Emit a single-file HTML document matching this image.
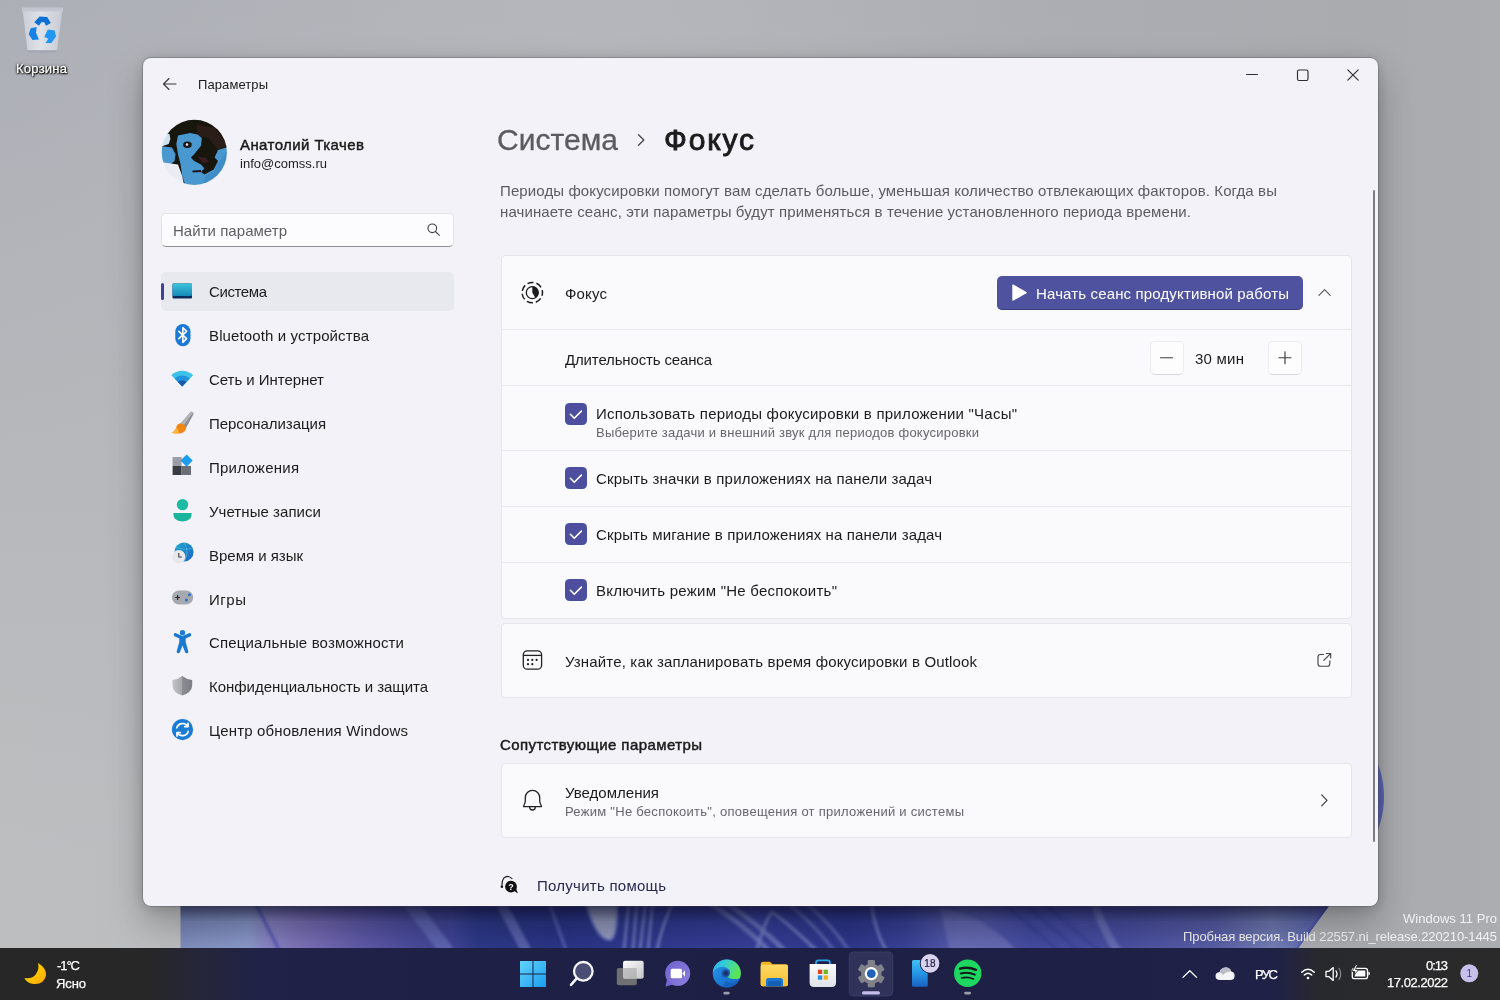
<!DOCTYPE html>
<html lang="ru"><head><meta charset="utf-8"><title>Параметры — Фокус</title>
<style>
*{box-sizing:border-box;margin:0;padding:0}
html,body{width:1500px;height:1000px;overflow:hidden}
body{position:relative;font-family:"Liberation Sans",sans-serif;background:#b3b5b9;}
.t{position:absolute;white-space:nowrap;}
.a{position:absolute;}
#desk{left:0;top:0;width:1500px;height:1000px;}
#win{left:143px;top:58px;width:1235px;height:848px;background:#f2f2f8;border-radius:8px;
 box-shadow:0 0 0 1px rgba(70,70,76,.32),0 18px 36px rgba(0,0,0,.26),0 2px 14px rgba(0,0,0,.16);}
.card{background:#fafafc;border:1px solid #e5e6ec;border-radius:4px;}
.div{height:1px;background:#e7e8ee;left:501px;width:850px;}
.cb{width:21.5px;height:21.5px;border-radius:4.5px;background:#4d4f9e;}
.nb{width:34px;height:34px;border-radius:5px;background:#fdfdfe;border:1px solid #ebecf1;border-bottom-color:#d6d7dd;}
#tb{left:0;top:948px;width:1500px;height:52px;background:linear-gradient(90deg,#272727 0,#272728 10%,#25263a 13.5%,#202247 17%,#1e2046 30%,#1d1f45 50%,#1e2046 70%,#1f2146 85%,#24253a 86.500%,#28292d 88%,#2a2a2c 92%,#2a2a2b 100%);}
svg{position:absolute;overflow:visible}
</style></head><body>
<div class="a" id="desk"><svg class="a" style="left:0;top:0;" width="1500" height="1000" viewBox="0 0 1500 1000">
<defs>
<linearGradient id="dg" x1="0" y1="0" x2="0" y2="1"><stop offset="0" stop-color="#acafb6"/><stop offset=".3" stop-color="#b3b5ba"/><stop offset=".6" stop-color="#b9babd"/><stop offset=".85" stop-color="#bdbebf"/><stop offset="1" stop-color="#bebebf"/></linearGradient>
<linearGradient id="dgr" x1="0" y1="0" x2="1" y2="0"><stop offset="0" stop-color="#b9babe" stop-opacity="0"/><stop offset=".4" stop-color="#b9babe" stop-opacity=".7"/><stop offset=".7" stop-color="#abadb2" stop-opacity=".85"/><stop offset=".92" stop-color="#a9abaf" stop-opacity="1"/><stop offset="1" stop-color="#abadb0" stop-opacity="1"/></linearGradient>
<linearGradient id="bl" gradientUnits="userSpaceOnUse" x1="180" y1="0" x2="1330" y2="0">
<stop offset="0" stop-color="#8190c0"/><stop offset=".06" stop-color="#8b9acb"/><stop offset=".075" stop-color="#8a86c4"/><stop offset=".11" stop-color="#7b70b6"/><stop offset=".16" stop-color="#5f5aa8"/>
<stop offset=".2" stop-color="#4c4d9e"/><stop offset=".235" stop-color="#414698"/><stop offset=".26" stop-color="#2e3a8a"/><stop offset=".33" stop-color="#2a3586"/><stop offset=".42" stop-color="#323b92"/>
<stop offset=".5" stop-color="#38409a"/><stop offset=".58" stop-color="#2e378c"/><stop offset=".63" stop-color="#3a4298"/><stop offset=".68" stop-color="#5a60ae"/><stop offset=".74" stop-color="#454ca2"/>
<stop offset=".82" stop-color="#4a50a2"/><stop offset=".9" stop-color="#5a60a8"/><stop offset=".95" stop-color="#7580b6"/><stop offset="1" stop-color="#5a64b2"/></linearGradient>
<linearGradient id="bsh" x1="0" y1="0" x2="0" y2="1"><stop offset="0" stop-color="#10143a" stop-opacity=".55"/><stop offset=".35" stop-color="#10143a" stop-opacity=".12"/><stop offset="1" stop-color="#10143a" stop-opacity="0"/></linearGradient>
<clipPath id="bc"><path d="M180.500 890 V950 H1297 L1329 906 L1340 890 Z"/><ellipse cx="1340" cy="797" rx="44" ry="65"/></clipPath>
<filter id="bf"><feGaussianBlur stdDeviation="1.500"/></filter>
</defs>
<rect width="1500" height="1000" fill="url(#dg)"/>
<rect width="1500" height="1000" fill="url(#dgr)"/>
<g clip-path="url(#bc)">
<rect x="170" y="700" width="1240" height="250" fill="url(#bl)"/>
<g filter="url(#bf)" fill="none" stroke-linecap="round">
<path d="M254 900 L279 950" stroke="#4a50b2" stroke-width="2.500"/>
<path d="M408 900 L446 950" stroke="#727bc2" stroke-width="14" opacity=".6"/>
<path d="M499 900 L526 950" stroke="#6c75bc" stroke-width="10" opacity=".7"/>
<path d="M550 905 L566 950" stroke="#6a74c0" stroke-width="3" opacity=".7"/>
<path d="M585 900 Q596 940 610 940 Q618 938 617 900Z" fill="#9aa0c2" stroke="#6e7ac6" stroke-width="2"/>
<path d="M629 900 L624 950 M637 900 L633 950 M646 900 L640 950 M653 900 L648 950" stroke="#7c88ca" stroke-width="2.600" opacity=".85"/>
<path d="M674 900 Q662 925 657 950" stroke="#7a86c8" stroke-width="2.400"/>
<path d="M705 900 Q745 925 770 952 M722 900 Q760 925 786 952" stroke="#7a84c6" stroke-width="5" opacity=".7"/>
<path d="M756 952 Q766 918 772 912 Q790 925 818 952" stroke="#7a84c8" stroke-width="3" opacity=".85"/>
<path d="M790 905 Q815 925 835 952 M806 903 Q832 925 850 952" stroke="#6872ba" stroke-width="3" opacity=".8"/>
<path d="M871 900 Q874 930 887 952" stroke="#7a86ca" stroke-width="2.400"/>
<path d="M940 908 Q985 915 1018 952 L950 952Z" fill="#6a70b8" stroke="none" opacity=".8"/>
<path d="M1000 900 L1060 952 M1020 900 L1080 952 M1040 900 L1100 952" stroke="#2c3590" stroke-width="2" opacity=".6"/>
<path d="M1094 900 Q1100 925 1118 952" stroke="#8088c6" stroke-width="8" opacity=".55"/>
<path d="M1329 905 L1297 950" stroke="#4a55b4" stroke-width="2.500"/>
</g>
<rect x="170" y="906" width="1240" height="44" fill="url(#bsh)"/>
</g>
</svg></div>
<svg class="a" style="left:0;top:0;" width="1500" height="1000" viewBox="0 0 1500 1000">
<defs><linearGradient id="rb" x1="0" y1="0" x2="1" y2="0"><stop offset="0" stop-color="#c9cdd7"/><stop offset=".45" stop-color="#e0e3e9"/><stop offset="1" stop-color="#c6cad4"/></linearGradient>
<filter id="rbf"><feGaussianBlur stdDeviation=".35"/></filter></defs>
<g filter="url(#rbf)">
<path d="M22.500 9.500 L62.500 9.500 L57 50 Q56.500 51.500 54.500 51.500 L30 51.500 Q28 51.500 27.500 50 Z" fill="url(#rb)" opacity=".97"/>
<path d="M21.800 7.500 H63 V11.500 H21.800Z" fill="#c3c7d1" opacity=".9"/>
<path d="M27.500 50.200 H56.500 V52.300 H27.500Z" fill="#a2a6b2"/>
<g transform="translate(42.500 30) scale(1.180) translate(-42.500 -30)">
<path d="M35.500 23.500 L40 18.500 L46.500 19 L49.500 24 L45.500 26.500 L44 23.500 L41.500 23.500 L39.500 26.500Z" fill="#0f6fd2"/>
<path d="M32.500 28.500 L37.500 27.500 L37 32.500 L39.500 38 L34 38.500 L30.800 33.500Z" fill="#1682e4"/>
<path d="M47 29.500 L52.800 30.500 L54 35.500 L50 41 L45 41 L47.500 37.500 L44 36Z" fill="#2196f3"/>
</g></g>
</svg>
<span class="t" style="top:59.5px;line-height:18px;font-size:13px;color:#fff;-webkit-text-stroke:0.3px #fff;letter-spacing:0.247px;left:16px;text-shadow:0 1px 2px #000,0 0 3px #000,1px 1px 1px rgba(0,0,0,.9),0 0 1px #000;">Корзина</span>
<span class="t" style="top:910.0px;line-height:18px;font-size:13px;color:#f1f1f3;letter-spacing:0.024px;right:3.0px;">Windows 11 Pro</span>
<span class="t" style="top:928.0px;line-height:18px;font-size:13px;color:#f1f1f3;letter-spacing:-0.083px;right:3.1px;">Пробная версия. Build 22557.ni_release.220210-1445</span>
<div class="a" id="win"></div>
<svg class="a" style="left:0;top:0;" width="1500" height="1000" viewBox="0 0 1500 1000"><path d="M176 84 H163.500 M169 78.500 L163.500 84 L169 89.500" fill="none" stroke="#3a3a3a" stroke-width="1.15" stroke-linecap="round" stroke-linejoin="round"/></svg>
<span class="t" style="top:76.0px;line-height:18px;font-size:13px;color:#1b1b1b;letter-spacing:0.088px;left:198px;">Параметры</span>
<svg class="a" style="left:0;top:0;" width="1500" height="1000" viewBox="0 0 1500 1000"><g fill="none" stroke="#2e2e2e" stroke-width="1.15" stroke-linecap="round">
<path d="M1246.500 74.500 H1257.500"/>
<rect x="1297.500" y="70" width="10.500" height="10.500" rx="1.500"/>
<path d="M1347.800 69.800 L1358.200 80.200 M1358.200 69.800 L1347.800 80.200"/></g></svg>
<svg class="a" style="left:0;top:0;" width="1500" height="1000" viewBox="0 0 1500 1000"><defs><clipPath id="av"><circle cx="194.300" cy="152.300" r="32.600"/></clipPath><filter id="avf"><feGaussianBlur stdDeviation=".55"/></filter></defs>
<g clip-path="url(#av)"><g filter="url(#avf)">
<rect x="158" y="116" width="74" height="74" fill="#17120f"/>
<path d="M196 124 L215 128 L228 146 L218 150 L208 138 L198 136Z" fill="#2a1a15"/>
<path d="M160 132 L169.500 134 L170.400 139 L168.700 144 L160 147Z" fill="#cfe0ee"/>
<path d="M160 146 L172 147.400 L175.500 154.200 L174.600 161 L170.400 164.400 L160 166Z" fill="#4b97cf"/>
<path d="M160 162 L178 164.400 L182.300 176.300 L185 190 L160 190Z" fill="#e9edf3"/>
<path d="M178 135.500 L190 133 L197.600 134.600 L201.800 138 L201 145.700 L197.600 150 L194.200 154.200 L190.800 157.600 L194.200 161 L201 164.400 L204.400 168.600 L201 172 L204.400 174.600 L213.700 169.500 L218 161 L214.600 157.600 L218 150 L228 147 L228 166 L218 180 L201 188 L185.700 186 L182.300 176.300 L180.600 164.400 L178 154.200 L176.300 144Z" fill="#4a98d0"/>
<path d="M205 176 L214 171 L219 162 L228 150 L228 170 L216 182 L202 187Z" fill="#3f8cc6"/>
<ellipse cx="187.400" cy="144.800" rx="4.300" ry="3.300" fill="#1b1513"/>
<circle cx="187" cy="144.600" r="1.300" fill="#d4e0ec"/>
<path d="M192.500 170.400 L201 169.900 L201 171.900 L192.500 172.400Z" fill="#1f181a"/>
<path d="M197 156 L206 158 L209 162 L203 163Z" fill="#3a1f22"/>
</g></g></svg>
<span class="t" style="top:134.0px;line-height:21px;font-size:15px;color:#1a1a1a;-webkit-text-stroke:0.45px #1a1a1a;letter-spacing:0.412px;left:240px;">Анатолий Ткачев</span>
<span class="t" style="top:155.0px;line-height:18px;font-size:13px;color:#1f1f1f;letter-spacing:0.009px;left:240px;">info@comss.ru</span>
<div class="a" style="left:161px;top:213px;width:293px;height:34px;background:#fcfcfe;border:1px solid #e3e4ea;border-bottom:1px solid #8d8e96;border-radius:5px;"></div>
<span class="t" style="top:219.5px;line-height:21px;font-size:15px;color:#5e5e62;letter-spacing:0.039px;left:173px;">Найти параметр</span>
<svg class="a" style="left:0;top:0;" width="1500" height="1000" viewBox="0 0 1500 1000"><g fill="none" stroke="#424242" stroke-width="1.15" stroke-linecap="round"><circle cx="432.300" cy="228.300" r="4.300"/><path d="M435.500 231.500 L439.300 235.300"/></g></svg>
<div class="a" style="left:161px;top:272px;width:293px;height:39px;background:#e8e9ef;border-radius:5px;"></div>
<div class="a" style="left:161px;top:282.5px;width:3px;height:17.5px;background:#3f4197;border-radius:2px;"></div>
<span class="t" style="top:281.0px;line-height:21px;font-size:15px;color:#1c1c1c;letter-spacing:-0.402px;left:209px;">Система</span>
<svg class="a" style="left:0;top:0;" width="1500" height="1000" viewBox="0 0 1500 1000"><defs><linearGradient id="sysg" x1="0" y1="0" x2="0" y2="1"><stop offset="0" stop-color="#3cc4dc"/><stop offset="1" stop-color="#1688b8"/></linearGradient></defs>
<rect x="172.500" y="283.500" width="19.500" height="15" rx="1" fill="#0b2d5e"/>
<rect x="172.500" y="283.500" width="19.500" height="12.600" rx="1" fill="url(#sysg)"/></svg>
<span class="t" style="top:325.0px;line-height:21px;font-size:15px;color:#1c1c1c;letter-spacing:0.125px;left:209px;">Bluetooth и устройства</span>
<svg class="a" style="left:0;top:0;" width="1500" height="1000" viewBox="0 0 1500 1000"><rect x="175.300" y="324" width="15.200" height="22.200" rx="7.600" fill="#1a7ad8"/>
<path d="M178.800 331.300 L186.600 338.700 L182.800 342.300 V327.700 L186.600 331.300 L178.800 338.700" fill="none" stroke="#fff" stroke-width="1.600" stroke-linejoin="round" stroke-linecap="round"/></svg>
<span class="t" style="top:369.0px;line-height:21px;font-size:15px;color:#1c1c1c;letter-spacing:-0.038px;left:209px;">Сеть и Интернет</span>
<svg class="a" style="left:0;top:0;" width="1500" height="1000" viewBox="0 0 1500 1000"><path d="M182.200 386.400 L171.300 375.200 A15.400 15.400 0 0 1 193.100 375.200Z" fill="#3fc2ea"/>
<path d="M182.200 386.400 L174.600 378.600 A10.800 10.800 0 0 1 189.800 378.600Z" fill="#2293dc"/>
<path d="M182.200 386.400 L177.900 382 A6.200 6.200 0 0 1 186.500 382Z" fill="#1a5aa8"/></svg>
<span class="t" style="top:413.0px;line-height:21px;font-size:15px;color:#1c1c1c;letter-spacing:-0.042px;left:209px;">Персонализация</span>
<svg class="a" style="left:0;top:0;" width="1500" height="1000" viewBox="0 0 1500 1000"><path d="M190.800 411.800 Q193.600 411.400 193.600 414 L185.800 428.200 L180 424.200Z" fill="#8b8d95"/>
<path d="M190.800 411.800 Q192.500 411.600 193.200 412.600 L183 426.300 L180 424.200Z" fill="#b2b4ba"/>
<path d="M180.200 423.400 Q185 423.600 186.200 428 Q185.600 433.400 178.500 433.400 Q174.500 433.800 171.600 432.800 Q175.600 430.500 176.200 427.200 Q177.200 423.400 180.200 423.400Z" fill="#f18612"/>
<path d="M171.600 432.800 Q175.600 430.500 176.200 427.200 Q179.400 431 178.500 433.400 Q174.500 433.800 171.600 432.800Z" fill="#f8b840"/></svg>
<span class="t" style="top:457.0px;line-height:21px;font-size:15px;color:#1c1c1c;letter-spacing:0.249px;left:209px;">Приложения</span>
<svg class="a" style="left:0;top:0;" width="1500" height="1000" viewBox="0 0 1500 1000"><rect x="172.600" y="457" width="9" height="9" fill="#9b9ea6"/>
<rect x="172.600" y="466" width="9" height="9" fill="#3a3c43"/>
<rect x="181.600" y="466" width="9.400" height="9" fill="#6c6e76"/>
<rect x="181.400" y="457.200" width="8.600" height="8.600" transform="rotate(45 185.700 461.500) translate(0 -1.3)" fill="#1b9cec"/></svg>
<span class="t" style="top:501.0px;line-height:21px;font-size:15px;color:#1c1c1c;letter-spacing:0.059px;left:209px;">Учетные записи</span>
<svg class="a" style="left:0;top:0;" width="1500" height="1000" viewBox="0 0 1500 1000"><circle cx="182.500" cy="504.600" r="5.700" fill="#1dbba4"/>
<path d="M173.300 513 H191.700 Q192 521.400 182.500 521.400 Q173 521.400 173.300 513Z" fill="#19b49c"/></svg>
<span class="t" style="top:544.5px;line-height:21px;font-size:15px;color:#1c1c1c;letter-spacing:-0.017px;left:209px;">Время и язык</span>
<svg class="a" style="left:0;top:0;" width="1500" height="1000" viewBox="0 0 1500 1000"><defs><linearGradient id="glb" x1="0" y1="0" x2="1" y2="1"><stop offset="0" stop-color="#22a8cc"/><stop offset="1" stop-color="#1d64c4"/></linearGradient></defs>
<circle cx="184" cy="552" r="9.600" fill="url(#glb)"/>
<path d="M184 542.400 Q190 552 184 561.600 M176 547 Q184 551 193 548" fill="none" stroke="#5cc8e8" stroke-width=".8" opacity=".6"/>
<circle cx="178.800" cy="556.800" r="6.700" fill="#e6e8ec"/>
<path d="M178.800 553 V557 H181.800" fill="none" stroke="#3a3c44" stroke-width="1.100"/></svg>
<span class="t" style="top:588.5px;line-height:21px;font-size:15px;color:#1c1c1c;letter-spacing:0.541px;left:209px;">Игры</span>
<svg class="a" style="left:0;top:0;" width="1500" height="1000" viewBox="0 0 1500 1000"><rect x="172" y="590.500" width="21.200" height="14" rx="7" fill="#a7a9b0"/>
<path d="M175.200 597.500 H180 M177.600 595.100 V599.900" stroke="#2b2b30" stroke-width="1.200" fill="none"/>
<circle cx="186.400" cy="600" r="1.500" fill="#2a6fd0"/><circle cx="189.400" cy="594.800" r="1.500" fill="#2a6fd0"/></svg>
<span class="t" style="top:632.0px;line-height:21px;font-size:15px;color:#1c1c1c;letter-spacing:0.159px;left:209px;">Специальные возможности</span>
<svg class="a" style="left:0;top:0;" width="1500" height="1000" viewBox="0 0 1500 1000"><circle cx="182.500" cy="632.700" r="2.600" fill="#1a7ad2"/>
<path d="M173.800 634.400 Q174.300 632.600 176 633.200 L182.500 636 L189 633.200 Q190.700 632.600 191.200 634.400 Q191.500 635.800 190 636.500 L185.700 638.600 V642 L188.300 651.200 Q188.600 653 187 653.300 Q185.600 653.500 185 652 L182.500 645.500 L180 652 Q179.400 653.500 178 653.300 Q176.400 653 176.700 651.200 L179.300 642 V638.600 L175 636.500 Q173.500 635.800 173.800 634.400Z" fill="#1a7ad2"/></svg>
<span class="t" style="top:676.0px;line-height:21px;font-size:15px;color:#1c1c1c;letter-spacing:-0.033px;left:209px;">Конфиденциальность и защита</span>
<svg class="a" style="left:0;top:0;" width="1500" height="1000" viewBox="0 0 1500 1000"><defs><linearGradient id="shg" x1="0" y1="0" x2="1" y2="0"><stop offset="0" stop-color="#c2c4c8"/><stop offset=".5" stop-color="#a4a6aa"/><stop offset=".5" stop-color="#8b8d92"/><stop offset="1" stop-color="#7c7e84"/></linearGradient></defs>
<path d="M182.300 676 Q186.500 679.400 192.200 680 V685.500 Q191.800 692.500 182.300 695.600 Q172.800 692.500 172.500 685.500 V680 Q178.100 679.400 182.300 676Z" fill="url(#shg)"/></svg>
<span class="t" style="top:720.0px;line-height:21px;font-size:15px;color:#1c1c1c;letter-spacing:0.166px;left:209px;">Центр обновления Windows</span>
<svg class="a" style="left:0;top:0;" width="1500" height="1000" viewBox="0 0 1500 1000"><circle cx="182.500" cy="729.600" r="10.600" fill="#1b7cd6"/>
<g fill="none" stroke="#fff" stroke-width="1.700" stroke-linecap="round" stroke-linejoin="round">
<path d="M176.800 727.800 A6 6 0 0 1 187.600 726.300"/><path d="M188.200 731.400 A6 6 0 0 1 177.400 732.900"/>
<path d="M188 723.300 V726.600 H184.700"/><path d="M177 735.900 V732.600 H180.300"/></g></svg>
<span class="t" style="top:119.5px;line-height:40px;font-size:30px;color:#5c5c60;-webkit-text-stroke:0.3px #5c5c60;letter-spacing:0.030px;left:497px;">Система</span>
<svg class="a" style="left:0;top:0;" width="1500" height="1000" viewBox="0 0 1500 1000"><path d="M638.500 134.800 L643.800 140 L638.500 145.200" fill="none" stroke="#4a4a4e" stroke-width="1.400" stroke-linecap="round" stroke-linejoin="round"/></svg>
<span class="t" style="top:119.5px;line-height:40px;font-size:30px;color:#1b1b1b;-webkit-text-stroke:0.9px #1b1b1b;letter-spacing:1.846px;left:664px;">Фокус</span>
<span class="t" style="top:180.0px;line-height:21px;font-size:15px;color:#5c5c60;letter-spacing:0.107px;left:500px;">Периоды фокусировки помогут вам сделать больше, уменьшая количество отвлекающих факторов. Когда вы</span>
<span class="t" style="top:201.0px;line-height:21px;font-size:15px;color:#5c5c60;letter-spacing:0.101px;left:500px;">начинаете сеанс, эти параметры будут применяться в течение установленного периода времени.</span>
<div class="a card" style="left:501px;top:255px;width:851px;height:364px;"></div>
<div class="a div" style="top:329px"></div>
<div class="a div" style="top:385px"></div>
<div class="a div" style="top:450px"></div>
<div class="a div" style="top:506px"></div>
<div class="a div" style="top:562px"></div>
<svg class="a" style="left:0;top:0;" width="1500" height="1000" viewBox="0 0 1500 1000"><g fill="none" stroke="#1c1c1c">
<circle cx="532.300" cy="292.600" r="10.200" stroke-width="1.500" stroke-dasharray="6.200 2.960" stroke-dashoffset="3" />
<circle cx="532.300" cy="292.600" r="6" stroke-width="1.300"/></g>
<path d="M532.300 292.600 V286.600 A6 6 0 0 1 535.300 297.800Z" fill="#1c1c1c"/></svg>
<span class="t" style="top:283.0px;line-height:21px;font-size:15px;color:#1b1b1b;letter-spacing:0.173px;left:565px;">Фокус</span>
<div class="a" style="left:997px;top:276px;width:306px;height:34px;background:#4f529f;border-radius:5px;border-bottom:1px solid #3c3e80;"></div>
<svg class="a" style="left:0;top:0;" width="1500" height="1000" viewBox="0 0 1500 1000"><path d="M1012.300 285.300 Q1012.300 284 1013.500 284.600 L1026.300 291.900 Q1027.400 292.600 1026.300 293.300 L1013.500 300.600 Q1012.300 301.200 1012.300 299.900Z" fill="#fff"/></svg>
<span class="t" style="top:283.0px;line-height:21px;font-size:15px;color:#fff;letter-spacing:0.146px;left:1036px;">Начать сеанс продуктивной работы</span>
<svg class="a" style="left:0;top:0;" width="1500" height="1000" viewBox="0 0 1500 1000"><path d="M1319 295.400 L1324.600 289.700 L1330.200 295.400" fill="none" stroke="#5a5a5e" stroke-width="1.200" stroke-linecap="round" stroke-linejoin="round"/></svg>
<span class="t" style="top:348.5px;line-height:21px;font-size:15px;color:#1b1b1b;letter-spacing:-0.150px;left:565px;">Длительность сеанса</span>
<div class="a nb" style="left:1150px;top:341px;"></div>
<div class="a nb" style="left:1268px;top:341px;"></div>
<svg class="a" style="left:0;top:0;" width="1500" height="1000" viewBox="0 0 1500 1000"><g fill="none" stroke="#3c3c3c" stroke-width="1.150" stroke-linecap="round"><path d="M1160.500 357.700 H1172.500"/><path d="M1279 357.700 H1291 M1285 351.700 V363.700"/></g></svg>
<span class="t" style="top:348.0px;line-height:21px;font-size:15px;color:#1b1b1b;letter-spacing:0.234px;left:1195px;">30 мин</span>
<div class="a cb" style="left:565.400px;top:403.3px;"></div>
<svg class="a" style="left:0;top:0;" width="1500" height="1000" viewBox="0 0 1500 1000"><path d="M570.4 414.3 L574.3 418.2 L581.4 411.1" fill="none" stroke="#fff" stroke-width="1.600" stroke-linecap="round" stroke-linejoin="round"/></svg>
<span class="t" style="top:403.0px;line-height:21px;font-size:15px;color:#1b1b1b;letter-spacing:0.237px;left:596px;">Использовать периоды фокусировки в приложении "Часы"</span>
<div class="a cb" style="left:565.400px;top:467.3px;"></div>
<svg class="a" style="left:0;top:0;" width="1500" height="1000" viewBox="0 0 1500 1000"><path d="M570.4 478.3 L574.3 482.2 L581.4 475.1" fill="none" stroke="#fff" stroke-width="1.600" stroke-linecap="round" stroke-linejoin="round"/></svg>
<span class="t" style="top:468.0px;line-height:21px;font-size:15px;color:#1b1b1b;letter-spacing:0.170px;left:596px;">Скрыть значки в приложениях на панели задач</span>
<div class="a cb" style="left:565.400px;top:523.3px;"></div>
<svg class="a" style="left:0;top:0;" width="1500" height="1000" viewBox="0 0 1500 1000"><path d="M570.4 534.3 L574.3 538.2 L581.4 531.1" fill="none" stroke="#fff" stroke-width="1.600" stroke-linecap="round" stroke-linejoin="round"/></svg>
<span class="t" style="top:524.0px;line-height:21px;font-size:15px;color:#1b1b1b;letter-spacing:0.137px;left:596px;">Скрыть мигание в приложениях на панели задач</span>
<div class="a cb" style="left:565.400px;top:579.3px;"></div>
<svg class="a" style="left:0;top:0;" width="1500" height="1000" viewBox="0 0 1500 1000"><path d="M570.4 590.3 L574.3 594.2 L581.4 587.1" fill="none" stroke="#fff" stroke-width="1.600" stroke-linecap="round" stroke-linejoin="round"/></svg>
<span class="t" style="top:580.0px;line-height:21px;font-size:15px;color:#1b1b1b;letter-spacing:0.251px;left:596px;">Включить режим "Не беспокоить"</span>
<span class="t" style="top:424.0px;line-height:18px;font-size:13px;color:#66666b;letter-spacing:0.233px;left:596px;">Выберите задачи и внешний звук для периодов фокусировки</span>
<div class="a card" style="left:501px;top:623px;width:851px;height:75px;"></div>
<svg class="a" style="left:0;top:0;" width="1500" height="1000" viewBox="0 0 1500 1000"><g fill="none" stroke="#222" stroke-width="1.300"><rect x="523.300" y="650.800" width="18.300" height="18.400" rx="4"/><path d="M523.300 655.400 H541.600"/></g>
<g fill="#1c1c1c"><circle cx="528" cy="659.900" r="1.100"/><circle cx="532.300" cy="659.900" r="1.100"/><circle cx="536.600" cy="659.900" r="1.100"/><circle cx="528" cy="664.200" r="1.100"/><circle cx="532.300" cy="664.200" r="1.100"/></g></svg>
<span class="t" style="top:650.5px;line-height:21px;font-size:15px;color:#1b1b1b;letter-spacing:0.154px;left:565px;">Узнайте, как запланировать время фокусировки в Outlook</span>
<svg class="a" style="left:0;top:0;" width="1500" height="1000" viewBox="0 0 1500 1000"><g fill="none" stroke="#444" stroke-width="1.150" stroke-linecap="round" stroke-linejoin="round">
<path d="M1323.500 654.500 H1320.500 Q1318 654.500 1318 657 V663.700 Q1318 666.200 1320.500 666.200 H1327.300 Q1329.800 666.200 1329.800 663.700 V660.700"/>
<path d="M1323.800 660.400 L1330.600 653.600 M1326.300 653.500 H1330.700 V657.900"/></g></svg>
<span class="t" style="top:734.0px;line-height:21px;font-size:15px;color:#1a1a1a;-webkit-text-stroke:0.45px #1a1a1a;letter-spacing:0.419px;left:500px;">Сопутствующие параметры</span>
<div class="a card" style="left:501px;top:763px;width:851px;height:75px;"></div>
<svg class="a" style="left:0;top:0;" width="1500" height="1000" viewBox="0 0 1500 1000"><g fill="none" stroke="#222" stroke-width="1.300" stroke-linejoin="round" stroke-linecap="round">
<path d="M523.500 806.600 L525.300 801.600 V797.600 A7.200 7.300 0 0 1 539.700 797.600 V801.600 L541.500 806.600 Z"/>
<path d="M529.700 807 A2.800 3 0 0 0 535.300 807"/></g></svg>
<span class="t" style="top:782.0px;line-height:21px;font-size:15px;color:#1b1b1b;letter-spacing:0.021px;left:565px;">Уведомления</span>
<span class="t" style="top:803.0px;line-height:18px;font-size:13px;color:#66666b;letter-spacing:0.274px;left:565px;">Режим "Не беспокоить", оповещения от приложений и системы</span>
<svg class="a" style="left:0;top:0;" width="1500" height="1000" viewBox="0 0 1500 1000"><path d="M1321.700 794.800 L1327 800.300 L1321.700 805.800" fill="none" stroke="#3c3c3c" stroke-width="1.200" stroke-linecap="round" stroke-linejoin="round"/></svg>
<svg class="a" style="left:0;top:0;" width="1500" height="1000" viewBox="0 0 1500 1000"><path d="M512 878.600 Q507.500 874.500 503.800 878.200 Q501.800 880.600 502 886" fill="none" stroke="#1a1a1a" stroke-width="1.100" stroke-linecap="round"/>
<circle cx="501.900" cy="886.800" r="1.300" fill="#1a1a1a"/>
<circle cx="511" cy="886.600" r="5.900" fill="#111"/><path d="M513.500 890.500 L518 893.600 L515.800 888Z" fill="#111"/>
<text x="511" y="889.800" font-size="9" font-weight="700" fill="#fff" text-anchor="middle" font-family="Liberation Sans,sans-serif">?</text></svg>
<span class="t" style="top:875.1px;line-height:21px;font-size:15px;color:#29294f;letter-spacing:0.259px;left:537px;">Получить помощь</span>
<div class="a" style="left:1373px;top:190px;width:2px;height:652px;background:#7c7c83;border-radius:1px;"></div>
<div class="a" id="tb"></div>
<svg class="a" style="left:0;top:0;" width="1500" height="1000" viewBox="0 0 1500 1000">
<defs>
<linearGradient id="stg" gradientUnits="userSpaceOnUse" x1="520" y1="961" x2="546" y2="987"><stop offset="0" stop-color="#62d4fa"/><stop offset="1" stop-color="#1a9cf0"/></linearGradient>
<linearGradient id="mng" x1="0" y1="0" x2="1" y2="1"><stop offset="0" stop-color="#ffe000"/><stop offset="1" stop-color="#ffa800"/></linearGradient>
<linearGradient id="tvg" x1="0" y1="0" x2="1" y2="1"><stop offset="0" stop-color="#fdfdfd"/><stop offset="1" stop-color="#c4c4c6"/></linearGradient>
<linearGradient id="chg" x1="0" y1="0" x2="1" y2="1"><stop offset="0" stop-color="#6f62cc"/><stop offset="1" stop-color="#8d7fe0"/></linearGradient>
<linearGradient id="phg" x1="0" y1="0" x2="0" y2="1"><stop offset="0" stop-color="#44c0f4"/><stop offset=".5" stop-color="#2596e4"/><stop offset="1" stop-color="#1a62c2"/></linearGradient>
<linearGradient id="fog" x1="0" y1="0" x2="0" y2="1"><stop offset="0" stop-color="#ffd866"/><stop offset="1" stop-color="#f8c030"/></linearGradient>
<linearGradient id="bag" x1="0" y1="0" x2="0" y2="1"><stop offset="0" stop-color="#fafafa"/><stop offset="1" stop-color="#dfe3ea"/></linearGradient>
<clipPath id="edc"><circle cx="726.800" cy="973.500" r="14"/></clipPath>
<linearGradient id="edb" x1="0" y1="0" x2="1" y2="1"><stop offset="0" stop-color="#2d9cec"/><stop offset=".5" stop-color="#1c7cd8"/><stop offset="1" stop-color="#1560c0"/></linearGradient>
<linearGradient id="edt" x1="0" y1="0" x2="1" y2=".35"><stop offset="0" stop-color="#2ea8ec"/><stop offset=".4" stop-color="#32c8dc"/><stop offset=".75" stop-color="#4adc90"/><stop offset="1" stop-color="#5ce452"/></linearGradient>
<filter id="edf"><feGaussianBlur stdDeviation=".8"/></filter>
</defs>
<!-- moon -->
<path d="M38 963 Q46.500 968 46 975.500 Q44 984.500 34 984 Q27 983.500 24.300 978 Q32 979.500 36 974 Q39.500 969 38 963Z" fill="url(#mng)"/>
<!-- start -->
<g fill="url(#stg)"><rect x="520" y="961" width="12.500" height="12.500"/><rect x="533.500" y="961" width="12.500" height="12.500"/><rect x="520" y="974.500" width="12.500" height="12.500"/><rect x="533.500" y="974.500" width="12.500" height="12.500"/></g>
<!-- search -->
<circle cx="583.300" cy="971.300" r="9.300" fill="#4b4d74" stroke="#f4f4f8" stroke-width="2.300"/>
<path d="M576.700 978.300 L571 984.800" stroke="#f4f4f8" stroke-width="2.600" stroke-linecap="round"/>
<!-- task view -->
<rect x="616.800" y="968" width="20" height="17.300" rx="2" fill="#707072"/>
<rect x="623" y="960.700" width="20.700" height="18" rx="2" fill="url(#tvg)"/>
<rect x="623" y="968" width="13.800" height="10.700" fill="#9d9d9f" opacity=".55"/>
<!-- chat -->
<circle cx="677.700" cy="973.300" r="12.500" fill="url(#chg)"/>
<path d="M667 979 L665.500 986.500 L673 984.500Z" fill="#7366d0"/>
<rect x="670.700" y="968.700" width="11.300" height="9.600" rx="1.500" fill="#fff"/><path d="M682.300 973.500 L685 970.300 V976.700Z" fill="#fff"/>
<!-- edge -->
<g clip-path="url(#edc)"><rect x="712" y="958" width="30" height="30" fill="url(#edb)"/>
<path d="M726 981 Q734 986 741 978 L741 988 L722 988Z" fill="#155cbc" opacity=".7"/>
<path d="M712 974 Q712 958 727 958.500 Q742 959 741.500 975 Q740.500 979.500 734 979 Q729 978.600 727.500 977 Q731.500 973.500 729 969.500 Q725 965.500 718.500 967.500 Q714 969.500 712 974Z" fill="url(#edt)"/>
<circle cx="725.800" cy="973.200" r="3.300" fill="#1a2a6c" filter="url(#edf)"/>
</g>
<rect x="723.300" y="991.700" width="6.400" height="2.700" rx="1.300" fill="#9c9cac"/>
<!-- explorer -->
<path d="M760.700 964 Q760.700 961.700 763 961.700 H770 L772.500 964.200 H786 Q788 964.200 788 966.200 V984.300 Q788 986.300 786 986.300 H762.700 Q760.700 986.300 760.700 984.300Z" fill="#f2b51d"/>
<rect x="760.700" y="964.800" width="27.300" height="21.500" rx="2" fill="url(#fog)"/>
<path d="M766 986.300 V980.500 Q766 978 768.500 978 H780.500 Q783 978 783 980.500 V986.300Z" fill="#1a78d2"/>
<path d="M768 986.300 V982.500 Q768 981 769.500 981 H779.500 Q781 981 781 982.500 V986.300Z" fill="#1461b4"/>
<!-- store -->
<path d="M816 964.500 V962.800 Q816 960.300 818.500 960.300 H827.500 Q830 960.300 830 962.800 V964.500" fill="none" stroke="#2ba2ea" stroke-width="1.800"/>
<path d="M809.600 964 H836 V982.500 Q836 987 831.500 987 H814.100 Q809.600 987 809.600 982.500Z" fill="url(#bag)"/>
<rect x="817.900" y="969.700" width="4.300" height="4.300" fill="#e8421e"/><rect x="823.600" y="969.700" width="4.300" height="4.300" fill="#6fb81e"/>
<rect x="817.900" y="975.400" width="4.300" height="4.300" fill="#2090ea"/><rect x="823.600" y="975.400" width="4.300" height="4.300" fill="#f8b010"/>
<!-- settings -->
<rect x="849.300" y="952" width="43.400" height="44" rx="4" fill="#30325a" stroke="#3a3c66" stroke-width="1"/>
<g transform="translate(871.300 973.700)" fill="#80828a">
<circle r="10.200"/>
<rect x="-3.600" y="-13.600" width="7.200" height="6" rx="1.200" transform="rotate(0)"/><rect x="-3.600" y="-13.600" width="7.200" height="6" rx="1.200" transform="rotate(60)"/><rect x="-3.600" y="-13.600" width="7.200" height="6" rx="1.200" transform="rotate(120)"/><rect x="-3.600" y="-13.600" width="7.200" height="6" rx="1.200" transform="rotate(180)"/><rect x="-3.600" y="-13.600" width="7.200" height="6" rx="1.200" transform="rotate(240)"/><rect x="-3.600" y="-13.600" width="7.200" height="6" rx="1.200" transform="rotate(300)"/>
<circle r="6.600" fill="#fbfbfd"/><circle r="4.400" fill="#2062ba"/></g>
<rect x="862" y="991.300" width="18" height="3.300" rx="1.600" fill="#c4bcec"/>
<!-- phone -->
<rect x="912" y="960" width="15.700" height="26.700" rx="1.500" fill="url(#phg)"/>
<circle cx="930" cy="963.400" r="10.200" fill="#1f2146"/><circle cx="930" cy="963.400" r="9.300" fill="#d9d2ee"/>
<!-- spotify -->
<circle cx="967.700" cy="973.300" r="13.700" fill="#1ed760"/>
<g fill="none" stroke="#15191c" stroke-linecap="round"><path d="M960 968.600 Q968 966.200 976 969.800" stroke-width="2.500"/><path d="M960.800 973.500 Q968 971.500 974.800 974.600" stroke-width="2.100"/><path d="M961.600 978 Q968 976.500 973.500 979" stroke-width="1.700"/></g>
<rect x="964.200" y="991.700" width="6.800" height="2.700" rx="1.300" fill="#9c9cac"/>
<!-- tray chevron -->
<path d="M1183 977.400 L1189.800 970.700 L1196.600 977.400" fill="none" stroke="#fff" stroke-width="1.300" stroke-linecap="round" stroke-linejoin="round"/>
<!-- cloud -->
<path d="M1220 980 Q1215.500 980 1215.500 976 Q1215.500 972.500 1219.500 972.200 Q1221 967.600 1226 967.600 Q1230 967.600 1231.300 971.500 Q1234.600 972 1234.600 975.800 Q1234.600 980 1230.500 980Z" fill="#f4f4f6"/>
<path d="M1219.500 972.200 Q1221 967.600 1226 967.600 Q1230 967.600 1231.300 971.500 Q1226 971 1223 975 Q1221 972.300 1219.500 972.200Z" fill="#b9bbc6"/>
<!-- wifi -->
<g fill="none" stroke="#fff" stroke-width="1.500" stroke-linecap="round"><path d="M1301.800 972.300 Q1308 966.200 1314.200 972.300"/><path d="M1304.300 975 Q1308 971.400 1311.700 975"/></g><circle cx="1308" cy="978" r="1.300" fill="#fff"/>
<!-- speaker -->
<path d="M1326 971.300 H1329 L1333.200 967.600 V980.400 L1329 976.700 H1326Z" fill="none" stroke="#fff" stroke-width="1.300" stroke-linejoin="round"/>
<path d="M1336 970.800 Q1338 974 1336 977.200" fill="none" stroke="#fff" stroke-width="1.200" stroke-linecap="round"/>
<path d="M1339 968.300 Q1342.500 974 1339 979.700" fill="none" stroke="#8a8a8e" stroke-width="1.200" stroke-linecap="round"/>
<!-- battery -->
<rect x="1352.300" y="968.300" width="15.200" height="10.400" rx="2.200" fill="none" stroke="#fff" stroke-width="1.300"/>
<path d="M1368.300 971.500 Q1369.800 971.500 1369.800 973.500 Q1369.800 975.500 1368.300 975.500Z" fill="#fff"/>
<path d="M1356.500 970.600 H1365.300 V976.400 H1354.500Z" fill="#fff"/>
<path d="M1356 964.500 L1352 971.500 H1355 L1353.500 976 L1358.500 969.500 H1355.500 L1357.500 964.500Z" fill="#fff" stroke="#27282a" stroke-width=".8"/>
<!-- notif -->
<circle cx="1469.300" cy="973.300" r="9" fill="#c6c0ea"/>
</svg>
<span class="t" style="top:957.0px;line-height:18px;font-size:13px;color:#fff;-webkit-text-stroke:0.25px #fff;letter-spacing:-1.049px;left:57px;">-1°C</span>
<span class="t" style="top:974.5px;line-height:18px;font-size:13px;color:#fff;-webkit-text-stroke:0.25px #fff;letter-spacing:-0.099px;left:56px;">Ясно</span>
<span class="t" style="top:965.5px;line-height:18px;font-size:13px;color:#fff;-webkit-text-stroke:0.25px #fff;letter-spacing:-1.516px;left:1255px;">РУС</span>
<span class="t" style="top:956.5px;line-height:18px;font-size:13px;color:#fff;-webkit-text-stroke:0.25px #fff;letter-spacing:-1.101px;right:53.1px;">0:13</span>
<span class="t" style="top:973.5px;line-height:18px;font-size:13px;color:#fff;-webkit-text-stroke:0.25px #fff;letter-spacing:-0.452px;right:52.5px;">17.02.2022</span>
<span class="t" style="top:957.2px;line-height:14px;font-size:10px;color:#1d1d3a;-webkit-text-stroke:0.2px #1d1d3a;letter-spacing:0.077px;left:924.3px;">18</span>
<span class="t" style="top:966.5px;line-height:14px;font-size:10px;color:#3b3d8a;left:1466.5px;">1</span>
</body></html>
